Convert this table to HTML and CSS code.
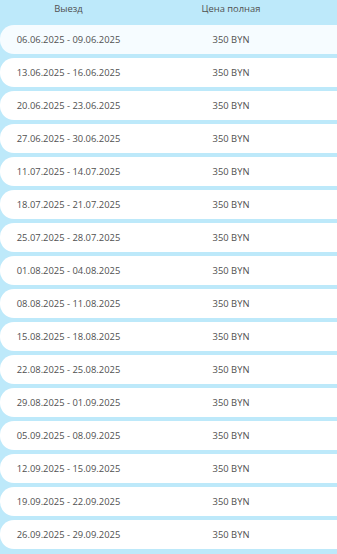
FILE: index.html
```html
<!DOCTYPE html>
<html lang="ru">
<head>
<meta charset="utf-8">
<link rel="stylesheet" href="styles.css">
</head>
<body>
<div class="table">
  <div class="head">
    <div class="c1">Выезд</div>
    <div class="c2">Цена полная</div>
  </div>
  <div class="row first"><div class="c1">06.06.2025 - 09.06.2025</div><div class="c2">350 BYN</div></div>
  <div class="row"><div class="c1">13.06.2025 - 16.06.2025</div><div class="c2">350 BYN</div></div>
  <div class="row"><div class="c1">20.06.2025 - 23.06.2025</div><div class="c2">350 BYN</div></div>
  <div class="row"><div class="c1">27.06.2025 - 30.06.2025</div><div class="c2">350 BYN</div></div>
  <div class="row"><div class="c1">11.07.2025 - 14.07.2025</div><div class="c2">350 BYN</div></div>
  <div class="row"><div class="c1">18.07.2025 - 21.07.2025</div><div class="c2">350 BYN</div></div>
  <div class="row"><div class="c1">25.07.2025 - 28.07.2025</div><div class="c2">350 BYN</div></div>
  <div class="row"><div class="c1">01.08.2025 - 04.08.2025</div><div class="c2">350 BYN</div></div>
  <div class="row"><div class="c1">08.08.2025 - 11.08.2025</div><div class="c2">350 BYN</div></div>
  <div class="row"><div class="c1">15.08.2025 - 18.08.2025</div><div class="c2">350 BYN</div></div>
  <div class="row"><div class="c1">22.08.2025 - 25.08.2025</div><div class="c2">350 BYN</div></div>
  <div class="row"><div class="c1">29.08.2025 - 01.09.2025</div><div class="c2">350 BYN</div></div>
  <div class="row"><div class="c1">05.09.2025 - 08.09.2025</div><div class="c2">350 BYN</div></div>
  <div class="row"><div class="c1">12.09.2025 - 15.09.2025</div><div class="c2">350 BYN</div></div>
  <div class="row"><div class="c1">19.09.2025 - 22.09.2025</div><div class="c2">350 BYN</div></div>
  <div class="row"><div class="c1">26.09.2025 - 29.09.2025</div><div class="c2">350 BYN</div></div>
</div>
</body>
</html>
```
FILE: styles.css
```css
html, body {
  margin: 0;
  padding: 0;
  background: #bde9fa;
  overflow: hidden;
}
.table {
  width: 100%;
  display: flex;
  flex-direction: column;
  gap: 4px;
  font-family: "Open Sans", sans-serif;
  font-size: 9.4px;
  color: #505050;
}
.head, .row {
  display: grid;
  grid-template-columns: 137px 188px 1fr;
  align-items: center;
}
.head {
  height: 21px;
  align-items: start;
  padding-top: 2px;
  box-sizing: border-box;
}
.row {
  height: 29px;
  background: #ffffff;
  border-radius: 14px 0 0 14px;
}
.row.first {
  background: #f6fcff;
}
.c1, .c2 {
  text-align: center;
}
```
